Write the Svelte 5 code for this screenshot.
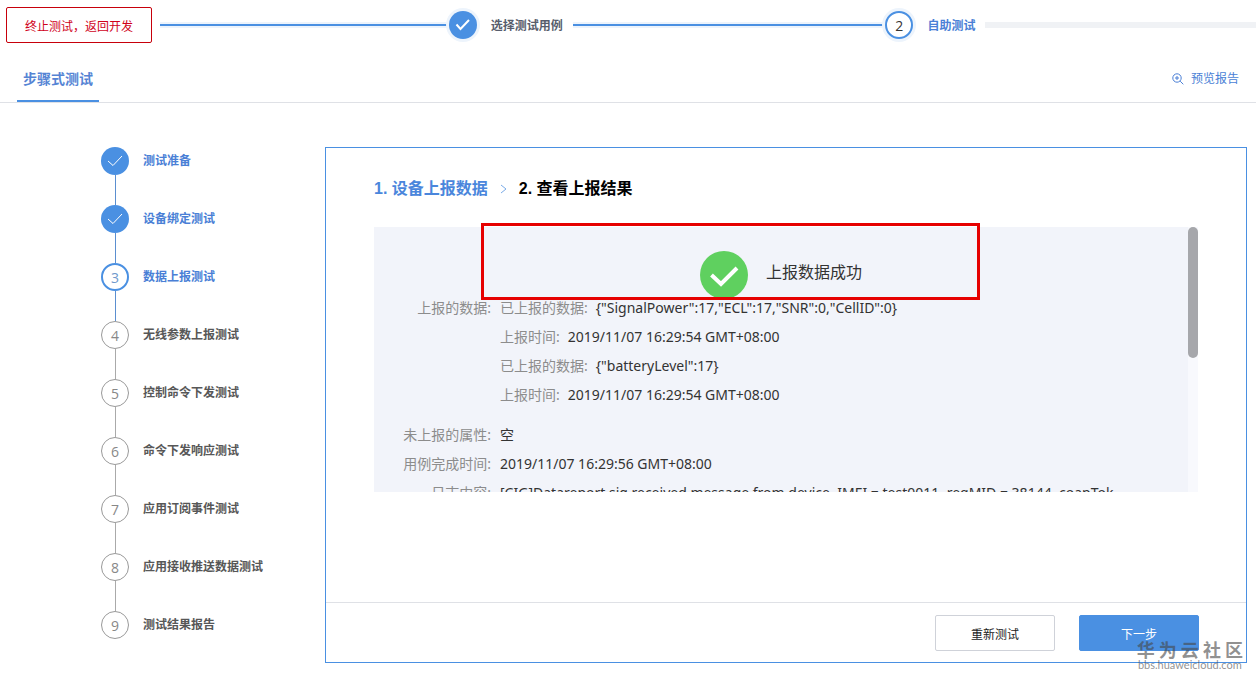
<script>
  // ── Top progress ───────────────────────────────────────────────────────────
  const phases = [
    { id: 1, title: '选择测试用例', state: 'done' },
    { id: 2, title: '自助测试',     state: 'current' },
  ]

  // ── Sidebar steps ──────────────────────────────────────────────────────────
  const stepTitles = [
    '测试准备',
    '设备绑定测试',
    '数据上报测试',
    '无线参数上报测试',
    '控制命令下发测试',
    '命令下发响应测试',
    '应用订阅事件测试',
    '应用接收推送数据测试',
    '测试结果报告',
  ]
  let current = $state(2)

  let steps = $derived(stepTitles.map((title, i) => ({
    title,
    num: i + 1,
    state: i < current ? 'done' : i === current ? 'current' : 'todo',
  })))

  function nextStep() {
    current = Math.min(current + 1, stepTitles.length - 1)
  }

  // ── Result ─────────────────────────────────────────────────────────────────
  const reports = [
    { label: '已上报的数据:', value: '{"SignalPower":17,"ECL":17,"SNR":0,"CellID":0}' },
    { label: '上报时间:',     value: '2019/11/07 16:29:54 GMT+08:00' },
    { label: '已上报的数据:', value: '{"batteryLevel":17}' },
    { label: '上报时间:',     value: '2019/11/07 16:29:54 GMT+08:00' },
  ]
  const log = '[CIG]Datareport sig received message from device, IMEI = test0011, reqMID = 38144, coapTok'
</script>

<div class="page">
  <header class="progress">
    <button class="abort">终止测试，返回开发</button>
    {#each phases as p}
      <span class="track filled"></span>
      <span class="phase {p.state}">
        <span class="dot">
          {#if p.state === 'done'}
            <svg width="16" height="14" viewBox="0 0 16 14"><path d="M1.5 6.5 5.5 11 14 2" /></svg>
          {:else}
            {p.id}
          {/if}
        </span>
        <span class="phase-title">{p.title}</span>
      </span>
    {/each}
    <span class="track"></span>
  </header>

  <nav class="tabs">
    <a class="tab" href="#steps">步骤式测试</a>
    <a class="preview" href="#report">
      <svg width="12" height="12" viewBox="0 0 12 12">
        <circle cx="5" cy="5" r="4.2" />
        <path d="M3 5h4M5 3v4M8.2 8.2 11.3 11.3" />
      </svg>
      预览报告
    </a>
  </nav>

  <main class="content">
    <ol class="steps">
      {#each steps as s}
        <li class="step {s.state}">
          <span class="dot">
            {#if s.state === 'done'}
              <svg width="16" height="12" viewBox="0 0 16 12"><path d="M1 6 6 10.5 15 1" /></svg>
            {:else}
              {s.num}
            {/if}
          </span>
          <span class="step-title">{s.title}</span>
        </li>
      {/each}
    </ol>

    <section class="panel">
      <div class="panel-body">
        <h2 class="crumbs">
          <a href="#upload">1. 设备上报数据</a>
          <svg width="7" height="10" viewBox="0 0 7 10"><path d="M1 1 6 5 1 9" /></svg>
          <span>2. 查看上报结果</span>
        </h2>

        <div class="result">
          <div class="result-view">
            <div class="success">
              <svg width="48" height="48" viewBox="0 0 48 48">
                <circle cx="24" cy="24" r="24" />
                <path d="M11.5 24 21 33 37 17" />
              </svg>
              <span>上报数据成功</span>
            </div>

            <dl class="fields">
              <dt>上报的数据:</dt>
              <dd class="reports">
                {#each reports as r}
                  <div><span class="label">{r.label}</span>{r.value}</div>
                {/each}
              </dd>
              <dt>未上报的属性:</dt>
              <dd>空</dd>
              <dt>用例完成时间:</dt>
              <dd>2019/11/07 16:29:56 GMT+08:00</dd>
              <dt>日志内容:</dt>
              <dd>{log}</dd>
            </dl>
          </div>
          <div class="scrollbar"><div class="thumb"></div></div>
          <div class="highlight"></div>
        </div>
      </div>

      <footer class="actions">
        <button class="btn">重新测试</button>
        <button class="btn primary" onclick={nextStep}>下一步</button>
      </footer>
    </section>
  </main>

  <div class="watermark">
    <strong>华 为 云 社 区</strong>
    <span>bbs.huaweicloud.com</span>
  </div>
</div>

<style>
  :global(body) { background: #fff; }

  .page {
    position: relative;
    padding-bottom: 16px;
    overflow: hidden;
    font-family: "Open Sans", "Noto Sans CJK SC", sans-serif;
    font-size: 12px;
    color: #333;
  }

  .page, .page * { box-sizing: border-box; }

  a { text-decoration: none; }
  button {
    padding: 2px 0 0;
    font-family: inherit;
    font-size: 12px;
    cursor: pointer;
  }
  svg { flex-shrink: 0; fill: none; }

  /* ── Top progress ── */
  .progress {
    display: flex;
    align-items: center;
    height: 50px;
    padding-left: 6px;
  }

  .abort {
    width: 146px;
    height: 36px;
    margin-right: 8px;
    border: 1px solid #c7000b;
    border-radius: 2px;
    background: #fff;
    color: #d0021b;
  }

  .track {
    flex: 45;
    height: 6px;
    background: #f0f2f5;
  }

  .track.filled {
    flex: 48;
    border: solid #edf4fc;
    border-width: 2px 0;
    background: #4a90e2;
  }

  .track.filled ~ .track.filled { flex: 52; }

  .phase {
    display: flex;
    align-items: center;
    gap: 14px;
    padding-right: 10px;
    font-weight: 700;
    color: #575d6c;
  }

  .phase.current { color: #4a7fd6; }

  .dot {
    display: flex;
    align-items: center;
    justify-content: center;
    width: 28px;
    height: 28px;
    border-radius: 50%;
    background: #fff;
    font-size: 14px;
    font-weight: 400;
    flex-shrink: 0;
  }

  .dot svg { stroke: #fff; }
  .done .dot { background: #4a90e2; }
  .current .dot { border: 2px solid #4a90e2; }

  .phase .dot { box-shadow: 0 0 0 3px #edf4fc; color: #333; }
  .phase .dot svg { stroke-width: 2; }

  /* ── Tabs ── */
  .tabs {
    display: flex;
    justify-content: space-between;
    height: 53px;
    padding: 0 17px;
    border-bottom: 1px solid #dfe1e6;
    line-height: 20px;
  }

  .tab {
    padding: 19px 6px 0;
    border-bottom: 2px solid #4a90e2;
    font-size: 14px;
    font-weight: 700;
    color: #5584d4;
  }

  .preview {
    display: flex;
    align-items: center;
    gap: 7px;
    padding-top: 6px;
    color: #4a7fd6;
  }

  .preview svg { stroke: #4a7fd6; }

  /* ── Content ── */
  .content {
    display: flex;
    padding: 44px 9px 0 101px;
  }

  .steps {
    width: 224px;
    margin: 0;
    padding: 0;
    list-style: none;
    flex-shrink: 0;
  }

  .step {
    position: relative;
    display: flex;
    align-items: center;
    gap: 14px;
    height: 28px;
    font-weight: 700;
    color: #575757;
  }

  .step + .step { margin-top: 30px; }

  /* connector up to the previous step */
  .step + .step::before {
    content: '';
    position: absolute;
    left: 14px;
    bottom: 28px;
    width: 1px;
    height: 30px;
    background: #aaa;
  }

  .step.done + .step::before,
  .step.current + .step::before { background: #5b8fd0; }

  .step.done,
  .step.current { color: #4a7fd6; }

  .step-title { padding-bottom: 2px; }
  .step .dot { color: #888; }
  .step.todo .dot { border: 1px solid #999; }
  .step.current .dot { color: #7099cc; }

  /* ── Panel ── */
  .panel {
    display: flex;
    flex-direction: column;
    flex: 1;
    min-width: 0;
    border: 1px solid #4a90e2;
  }

  .panel-body { padding: 28px 48px 110px; }

  .crumbs {
    display: flex;
    align-items: center;
    gap: 12px;
    margin: 0 0 25px;
    font-family: "Liberation Sans", "Noto Sans CJK SC", sans-serif;
    font-size: 16px;
    line-height: 26px;
    color: #000;
  }

  .crumbs a { color: #4a86dc; }
  .crumbs svg { stroke: #7aabe8; }

  .result {
    position: relative;
    display: flex;
    height: 265px;
    background: #f2f4fa;
  }

  .result-view {
    flex: 1;
    min-width: 0;
    overflow: hidden;
  }

  .success {
    display: flex;
    align-items: center;
    justify-content: center;
    gap: 18px;
    height: 66px;
    margin-top: 15px;
    font-size: 16px;
  }

  .success span { padding-bottom: 8px; }
  .success circle { fill: #5fd05f; }
  .success path { stroke: #fff; stroke-width: 4; }

  .fields {
    display: grid;
    grid-template-columns: 117px 1fr;
    column-gap: 9px;
    margin: -15px 0 0;
    font-family: "Noto Sans", "Noto Sans CJK SC", sans-serif;
    font-size: 14px;
    line-height: 29px;
    white-space: nowrap;
  }

  .fields dt { text-align: right; color: #8c8c8c; }
  .fields dd { margin: 0; }
  .fields .reports { margin-bottom: 11px; }
  .label { margin-right: 8px; color: #8c8c8c; }

  .scrollbar {
    width: 10px;
    background: #f8f9fd;
  }

  .thumb {
    height: 131px;
    border-radius: 5px;
    background: #a6a7ab;
  }

  .highlight {
    position: absolute;
    left: 107px;
    top: -4px;
    width: 499px;
    height: 77px;
    border: 3px solid #e60000;
    pointer-events: none;
  }

  .actions {
    display: flex;
    justify-content: flex-end;
    gap: 24px;
    padding: 12px 47px 11px;
    border-top: 1px solid #dfe1e6;
  }

  .btn {
    width: 120px;
    height: 36px;
    border: 1px solid #cfd2d9;
    border-radius: 2px;
    background: #fff;
    color: #222;
  }

  .btn.primary {
    border-color: #4a90e2;
    background: #4a90e2;
    color: #fff;
  }

  /* ── Watermark ── */
  .watermark {
    position: absolute;
    right: 13px;
    bottom: 8px;
    display: flex;
    flex-direction: column;
    align-items: center;
    color: rgba(70, 70, 70, 0.6);
    pointer-events: none;
  }

  .watermark strong {
    font-family: "Noto Sans CJK SC", sans-serif;
    font-size: 18px;
    line-height: 20px;
  }

  .watermark span {
    font-family: Lato, sans-serif;
    font-size: 11px;
    line-height: 12px;
  }
</style>
